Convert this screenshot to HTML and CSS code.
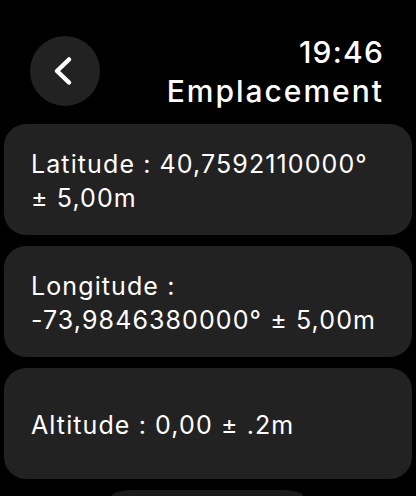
FILE: index.html
```html
<!DOCTYPE html>
<html lang="fr">
<head>
<meta charset="utf-8">
<title>Emplacement</title>
<link rel="stylesheet" href="styles.css">
</head>
<body>
<div class="screen">
  <header class="header">
    <button class="back" aria-label="Retour">
      <svg width="70" height="70" viewBox="0 0 70 70"><path d="M39 23.5 L27 35 L39 46.5" fill="none" stroke="#fff" stroke-width="4.5" stroke-linecap="round" stroke-linejoin="round"/></svg>
    </button>
    <div class="titles">
      <div class="time">19:46</div>
      <div class="title">Emplacement</div>
    </div>
  </header>
  <main class="list">
    <div class="card"><p>Latitude : 40,7592110000°<br>± 5,00m</p></div>
    <div class="card"><p>Longitude :<br>-73,9846380000° ± 5,00m</p></div>
    <div class="card"><p>Altitude : 0,00 ± .2m</p></div>
    <div class="more"></div>
  </main>
</div>
</body>
</html>
```
FILE: styles.css
```css
html, body {
  margin: 0;
  padding: 0;
  background: #000;
}
body {
  width: 416px;
  height: 496px;
  overflow: hidden;
  font-family: Inter, "Noto Sans", sans-serif;
  color: #fff;
}
.screen {
  display: flex;
  flex-direction: column;
  height: 496px;
  overflow: hidden;
}
.header {
  display: flex;
  justify-content: space-between;
  align-items: flex-start;
  padding: 33px 32px 0 30px;
}
.back {
  width: 70px;
  height: 70px;
  margin-top: 3px;
  border: none;
  border-radius: 50%;
  background: #222222;
  padding: 0;
  display: flex;
}
.titles {
  text-align: right;
  font-size: 30px;
  font-weight: 500;
  line-height: 39px;
}
.time {
  letter-spacing: 1.2px;
}
.title {
  letter-spacing: 2px;
}
.list {
  display: flex;
  flex-direction: column;
  gap: 11px;
  padding: 0 4px;
  margin-top: 13px;
}
.card {
  height: 111px;
  box-sizing: border-box;
  border-radius: 22px;
  background: #222222;
  padding: 3px 27px 0;
  display: flex;
  align-items: center;
}
.card p {
  margin: 0;
  font-size: 25px;
  line-height: 34px;
  font-weight: 400;
  letter-spacing: 1.1px;
}
.more {
  align-self: flex-start;
  margin-left: 108px;
  width: 191px;
  height: 6px;
  border-radius: 20px 20px 0 0 / 6px 6px 0 0;
  background: #1a1a1a;
}
```
